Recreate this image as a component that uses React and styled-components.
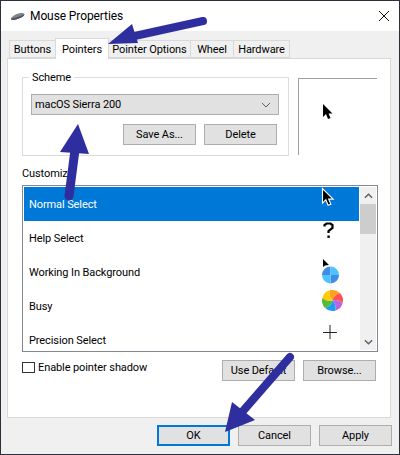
import React from 'react';
import styled, { createGlobalStyle } from 'styled-components';

// --- STYLES ---
const GlobalStyle = createGlobalStyle`
  html, body { margin: 0; padding: 0; background: #2b303a; }
  * { box-sizing: border-box; }
`;

const Window = styled.div`
  position: relative;
  width: 400px;
  height: 455px;
  border: 1px solid #2b303a;
  background: #f0f0f0;
  color: #000;
  font-family: 'Roboto', 'Liberation Sans', sans-serif;
  font-size: 11px;
  letter-spacing: -0.1px;
  overflow: hidden;
`;

const TitleBar = styled.div`
  height: 30px;
  background: #fff;
  display: flex;
  align-items: center;
  justify-content: space-between;
  padding: 0 9px 0 9px;
  font-size: 12px;
`;

const TitleLeft = styled.div`
  display: flex;
  align-items: center;
  gap: 5px;
`;

const Body = styled.div`
  padding: 7px 0 0 6px;
`;

const TabRow = styled.div`
  display: flex;
  height: 21px;
  margin-bottom: -1px;
  padding-left: 2px;
  position: relative;
  z-index: 1;
`;

const Tab = styled.div`
  width: ${(p) => p.$w}px;
  height: ${(p) => (p.$active ? 21 : 18)}px;
  margin-top: ${(p) => (p.$active ? 0 : 2)}px;
  margin-left: ${(p) => (p.$first ? 0 : -1)}px;
  background: ${(p) => (p.$active ? '#fff' : '#f0f0f0')};
  border: 1px solid #d9d9d9;
  border-bottom: ${(p) => (p.$active ? 'none' : '1px solid #d9d9d9')};
  display: flex;
  align-items: center;
  justify-content: center;
  white-space: nowrap;
  position: relative;
  z-index: ${(p) => (p.$active ? 2 : 0)};
`;

const Panel = styled.div`
  width: 384px;
  height: 360px;
  background: #fff;
  border: 1px solid #d9d9d9;
  padding: 18px 0 0 14px;
`;

const TopRow = styled.div`
  display: flex;
  align-items: flex-start;
`;

const Group = styled.div`
  position: relative;
  width: 267px;
  height: 79px;
  border: 1px solid #dcdcdc;
  padding: 16px 0 0 8px;
`;

const GroupLegend = styled.span`
  position: absolute;
  top: -8px;
  left: 6px;
  padding: 0 3px;
  background: #fff;
  line-height: 15px;
`;

const SelectBox = styled.div`
  width: 248px;
  height: 21px;
  background: #e1e1e1;
  border: 1px solid #adadad;
  display: flex;
  align-items: center;
  justify-content: space-between;
  padding: 0 7px 0 3px;
`;

const GroupButtons = styled.div`
  display: flex;
  justify-content: flex-end;
  gap: 8px;
  width: 246px;
  margin-top: 9px;
`;

const Button = styled.button`
  width: 73px;
  height: 21px;
  padding: 0;
  background: #e1e1e1;
  border: ${(p) => (p.$primary ? '2px solid #0078d7' : '1px solid #adadad')};
  color: #000;
  font: inherit;
  letter-spacing: inherit;
`;

const Preview = styled.div`
  width: 79px;
  height: 77px;
  margin: 1px 0 0 9px;
  border-top: 1px solid #a0a0a0;
  border-left: 1px solid #a0a0a0;
  padding: 25px 0 0 24px;
`;

const CustomizeLabel = styled.div`
  height: 16px;
  line-height: 16px;
  margin: 10px 0 3px;
`;

const List = styled.div`
  width: 356px;
  height: 167px;
  border: 1px solid #828790;
  padding: 1px;
  display: flex;
  gap: 1px;
  overflow: hidden;
`;

const Rows = styled.div`
  width: 335px;
  height: 163px;
  overflow: hidden;
`;

const Row = styled.div`
  height: 34px;
  display: flex;
  align-items: center;
  justify-content: space-between;
  padding: 0 14px 0 5px;
  background: ${(p) => (p.$selected ? '#0078d7' : '#fff')};
  color: ${(p) => (p.$selected ? '#fff' : '#000')};
`;

const RowIcon = styled.svg`
  display: block;
  width: 24px;
  height: 34px;
  flex: none;
  overflow: visible;
`;

const Scrollbar = styled.div`
  width: 16px;
  height: 163px;
  background: #f0f0f0;
  display: flex;
  flex-direction: column;
`;

const ScrollButton = styled.div`
  height: 17px;
  display: flex;
  align-items: center;
  justify-content: center;
`;

const ScrollThumb = styled.div`
  height: 30px;
  background: #cdcdcd;
`;

const ScrollTrack = styled.div`
  flex: 1;
`;

const BottomRow = styled.div`
  display: flex;
  justify-content: space-between;
  align-items: flex-start;
  width: 354px;
  margin-top: 8px;
`;

const CheckLabel = styled.label`
  display: flex;
  align-items: center;
  gap: 3px;
  height: 14px;
`;

const CheckBox = styled.span`
  width: 13px;
  height: 11px;
  border: 1px solid #333;
  background: #fff;
`;

const ButtonGroup = styled.div`
  display: flex;
  gap: 8px;
`;

const Footer = styled.div`
  display: flex;
  justify-content: flex-end;
  gap: 8px;
  width: 385px;
  padding-top: 7px;
`;

const Overlay = styled.svg`
  position: absolute;
  top: -1px;
  left: -1px;
  width: 400px;
  height: 455px;
  z-index: 5;
  pointer-events: none;
`;

// --- ICONS ---
const ARROW = '#2e2e9e';

const MouseIcon = () => (
  <svg width="15" height="9" viewBox="0 0 15 9">
    <path d="M1 6.5 C2 4 7 1.5 11 1 C13 .8 14.5 1.5 14.5 2.5 C14.5 4 10 6.5 6 7.5 C3 8.3 .5 8 1 6.5Z" fill="#7d8488" />
    <path d="M1 6.5 C3 6.8 9 5 14.5 2.5 C14.5 4 10 6.5 6 7.5 C3 8.3 .5 8 1 6.5Z" fill="#4b5054" />
  </svg>
);

const CloseIcon = () => (
  <svg width="12" height="12" viewBox="0 0 12 12">
    <path d="M1 1 L11 11 M11 1 L1 11" stroke="#111" strokeWidth="1" fill="none" />
  </svg>
);

const CURSOR = 'M0 0 V13 L3 10 L5 15 L7.5 14 L5.5 9.5 H9.5 Z';

const Chevron = ({ up, color = '#606060', w = 10 }) => (
  <svg width={w} height="6" viewBox="0 0 10 6">
    <path d={up ? 'M1 5 L5 1 L9 5' : 'M1 1 L5 5 L9 1'} stroke={color} strokeWidth={up || w !== 10 ? 1.6 : 1} fill="none" />
  </svg>
);

// slices of the spinning wheel with bent edges, centre 10.5/10.5
const R = 10.5;
const wheelColors = ['#ffa11a', '#ff5252', '#bb66dd', '#1e9cf0', '#58bb35', '#ffcc00'];
const wheelSlices = wheelColors.map((color, i) => {
  const at = (deg, r) => {
    const a = (deg - 90) * (Math.PI / 180);
    return `${(R + r * Math.cos(a)).toFixed(2)} ${(R + r * Math.sin(a)).toFixed(2)}`;
  };
  const s = i * 60 - 15;
  const e = s + 60;
  return {
    color,
    d: `M${R} ${R} Q${at(s - 30, 6)} ${at(s, R)} A${R} ${R} 0 0 1 ${at(e, R)} Q${at(e - 30, 6)} ${R} ${R} Z`,
  };
});

const NormalIcon = () => (
  <RowIcon viewBox="0 0 24 34">
    <path d={CURSOR} transform="translate(1.5 1.5) scale(1.12)" fill="#000" stroke="#fff" strokeWidth="1" />
  </RowIcon>
);

const HelpIcon = () => (
  <RowIcon viewBox="0 0 24 34">
    <path d="M3.5 5.5 V4 L5.5 2.5 H9.5 L11.5 4 V7 L7.5 10 V12" stroke="#000" strokeWidth="2.2" fill="none" />
    <rect x="6.4" y="14.5" width="2.4" height="2.4" fill="#000" />
  </RowIcon>
);

const WorkingIcon = () => (
  <RowIcon viewBox="0 0 24 34">
    <path d="M2 4 V12 L4 10.5 L8 10 Z" fill="#000" />
    <g transform="translate(1 11.5)">
      <path d="M8.5 8.5 V0 A8.5 8.5 0 0 0 0 8.5 Z" fill="#3f8de6" />
      <path d="M8.5 8.5 H17 A8.5 8.5 0 0 0 8.5 0 Z" fill="#4fc3ff" />
      <path d="M8.5 8.5 V17 A8.5 8.5 0 0 0 17 8.5 Z" fill="#3f8de6" />
      <path d="M8.5 8.5 H0 A8.5 8.5 0 0 0 8.5 17 Z" fill="#4fc3ff" />
    </g>
  </RowIcon>
);

const BusyIcon = () => (
  <RowIcon viewBox="0 0 24 34">
    <g transform="translate(1 1)">
      {wheelSlices.map((s) => (
        <path key={s.color} d={s.d} fill={s.color} />
      ))}
    </g>
  </RowIcon>
);

const PrecisionIcon = () => (
  <RowIcon viewBox="0 0 24 34">
    <path d="M2 9.5 H16 M9 2 V16" stroke="#222" strokeWidth="1" fill="none" />
  </RowIcon>
);

const tabs = [
  { label: 'Buttons', w: 47 },
  { label: 'Pointers', w: 54, active: true },
  { label: 'Pointer Options', w: 83 },
  { label: 'Wheel', w: 44 },
  { label: 'Hardware', w: 57 },
];

const rows = [
  { label: 'Normal Select', Icon: NormalIcon, selected: true },
  { label: 'Help Select', Icon: HelpIcon },
  { label: 'Working In Background', Icon: WorkingIcon },
  { label: 'Busy', Icon: BusyIcon },
  { label: 'Precision Select', Icon: PrecisionIcon },
];

// --- PAGE ---
export default function App() {
  return (
    <Window>
      <GlobalStyle />
      <TitleBar>
        <TitleLeft>
          <MouseIcon />
          Mouse Properties
        </TitleLeft>
        <CloseIcon />
      </TitleBar>
      <Body>
        <TabRow>
          {tabs.map((t, i) => (
            <Tab key={t.label} $w={t.w} $active={t.active} $first={i === 0}>
              {t.label}
            </Tab>
          ))}
        </TabRow>
        <Panel>
          <TopRow>
            <Group>
              <GroupLegend>Scheme</GroupLegend>
              <SelectBox>
                macOS Sierra 200
                <Chevron />
              </SelectBox>
              <GroupButtons>
                <Button>Save As...</Button>
                <Button>Delete</Button>
              </GroupButtons>
            </Group>
            <Preview>
              <svg width="10" height="16" viewBox="0 0 10 16">
                <path d={CURSOR} fill="#000" />
              </svg>
            </Preview>
          </TopRow>
          <CustomizeLabel>Customize:</CustomizeLabel>
          <List>
            <Rows>
              {rows.map(({ label, Icon, selected }) => (
                <Row key={label} $selected={selected}>
                  {label}
                  <Icon />
                </Row>
              ))}
            </Rows>
            <Scrollbar>
              <ScrollButton>
                <Chevron up w={9} />
              </ScrollButton>
              <ScrollThumb />
              <ScrollTrack />
              <ScrollButton>
                <Chevron w={9} />
              </ScrollButton>
            </Scrollbar>
          </List>
          <BottomRow>
            <CheckLabel>
              <CheckBox />
              Enable pointer shadow
            </CheckLabel>
            <ButtonGroup>
              <Button>Use Default</Button>
              <Button>Browse...</Button>
            </ButtonGroup>
          </BottomRow>
        </Panel>
        <Footer>
          <Button $primary>OK</Button>
          <Button>Cancel</Button>
          <Button>Apply</Button>
        </Footer>
      </Body>
      <Overlay viewBox="0 0 400 455">
        <path d="M203 21 L130 37" stroke={ARROW} strokeWidth="8" strokeLinecap="round" fill="none" />
        <path d="M108 44 L132 24 L138 43 Z" fill={ARROW} />
        <path d="M69 196 L75 150" stroke={ARROW} strokeWidth="9" strokeLinecap="round" fill="none" />
        <path d="M78 124 L60 152 L89 154 Z" fill={ARROW} />
        <path d="M290 357 L243 411" stroke={ARROW} strokeWidth="8" strokeLinecap="round" fill="none" />
        <path d="M225 432 L232 402 L255 420 Z" fill={ARROW} />
      </Overlay>
    </Window>
  );
}
